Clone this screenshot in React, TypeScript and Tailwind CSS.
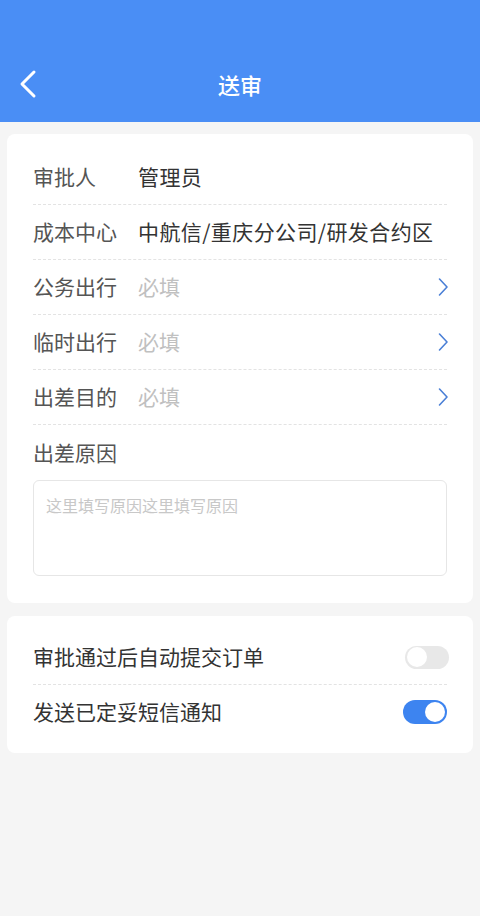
import React from "react";

const font = { fontFamily: '"Noto Sans CJK SC", "Noto Sans", sans-serif' };

function Chevron() {
  return (
    <svg width="12" height="20" viewBox="0 0 12 20" fill="none">
      <path d="M2.5 2 L10 10 L2.5 18" stroke="#4a7fd6" strokeWidth="1.6" strokeLinecap="round" strokeLinejoin="round" />
    </svg>
  );
}

function Row({ label, value, placeholder, arrow, last }: { label: string; value?: string; placeholder?: string; arrow?: boolean; last?: boolean }) {
  return (
    <div className={`flex items-center h-[55px] ${last ? "" : "border-b border-dashed border-[#e3e3e3]"}`}>
      <div className="w-[105px] shrink-0 text-[21px] text-[#555555]">{label}</div>
      {value ? (
        <div className="flex-1 text-[21px] text-[#333333] whitespace-nowrap tracking-[0.4px]">{value}</div>
      ) : (
        <div className="flex-1 text-[21px] text-[#c0c0c0]">{placeholder}</div>
      )}
      {arrow && (
        <div className="shrink-0 mr-[-2px]">
          <Chevron />
        </div>
      )}
    </div>
  );
}

function Toggle({ on }: { on: boolean }) {
  return on ? (
    <div className="w-[44px] h-[24px] rounded-full bg-[#3d84f0] flex items-center justify-end pr-[2px]">
      <div className="w-[20px] h-[20px] rounded-full bg-white" />
    </div>
  ) : (
    <div className="w-[44px] h-[23px] rounded-full bg-[#e8e8e8] flex items-center pl-[2px]">
      <div className="w-[20px] h-[20px] rounded-full bg-white" />
    </div>
  );
}

export default function App() {
  return (
    <div className="w-[480px] h-[916px] bg-[#f5f5f5] flex flex-col" style={font}>
      <div className="h-[122px] bg-[#4a8ef5] flex flex-col justify-end shrink-0">
        <div className="h-[76px] relative flex items-center justify-center">
          <div className="absolute left-[18px] top-[23px]">
            <svg width="20" height="30" viewBox="0 0 20 30" fill="none">
              <path d="M16 3 L4 15 L16 27" stroke="white" strokeWidth="3" strokeLinecap="round" strokeLinejoin="round" />
            </svg>
          </div>
          <div className="text-white text-[22px] font-medium">送审</div>
        </div>
      </div>

      <div className="mx-[7px] mt-[12px] bg-white rounded-[8px] pl-[26px] pr-[26px] pt-[16px] pb-[27px]">
        <Row label="审批人" value="管理员" />
        <Row label="成本中心" value="中航信/重庆分公司/研发合约区" />
        <Row label="公务出行" placeholder="必填" arrow />
        <Row label="临时出行" placeholder="必填" arrow />
        <Row label="出差目的" placeholder="必填" arrow />
        <div className="h-[55px] flex items-center text-[21px] text-[#555555]">出差原因</div>
        <div className="h-[96px] border border-[#e6e6e6] rounded-[6px] px-[12px] pt-[12px] text-[16px] text-[#c8c8c8] leading-[24px]">
          这里填写原因这里填写原因
        </div>
      </div>

      <div className="mx-[7px] mt-[13px] bg-white rounded-[8px] pl-[26px] pr-[26px] pt-[14px] pb-[14px]">
        <div className="h-[55px] flex items-center justify-between border-b border-dashed border-[#e3e3e3]">
          <div className="text-[21px] text-[#333333]">审批通过后自动提交订单</div>
          <div className="mr-[-2px]">
            <Toggle on={false} />
          </div>
        </div>
        <div className="h-[54px] flex items-center justify-between">
          <div className="text-[21px] text-[#333333]">发送已定妥短信通知</div>
          <Toggle on={true} />
        </div>
      </div>
    </div>
  );
}
